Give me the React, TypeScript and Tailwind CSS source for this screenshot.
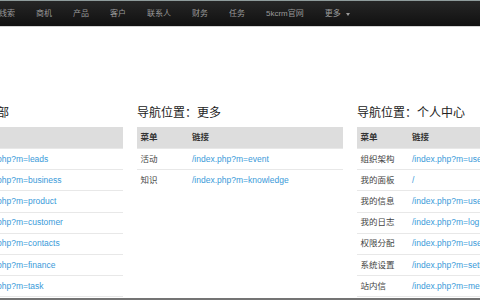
import React from "react";

const font = { fontFamily: '"Liberation Sans", Arial, "Noto Sans CJK SC", sans-serif' };

const navItems = ["线索", "商机", "产品", "客户", "联系人", "财务", "任务", "5kcrm官网"];

type Row = [string, string];

const topRows: Row[] = [
  ["线索", "/index.php?m=leads"],
  ["商机", "/index.php?m=business"],
  ["产品", "/index.php?m=product"],
  ["客户", "/index.php?m=customer"],
  ["联系人", "/index.php?m=contacts"],
  ["财务", "/index.php?m=finance"],
  ["任务", "/index.php?m=task"],
  ["日程", "/index.php?m=event"],
];

const moreRows: Row[] = [
  ["活动", "/index.php?m=event"],
  ["知识", "/index.php?m=knowledge"],
];

const userRows: Row[] = [
  ["组织架构", "/index.php?m=user&a=department"],
  ["我的面板", "/"],
  ["我的信息", "/index.php?m=user&a=edit"],
  ["我的日志", "/index.php?m=log"],
  ["权限分配", "/index.php?m=user&a=role"],
  ["系统设置", "/index.php?m=setting"],
  ["站内信", "/index.php?m=message"],
  ["通讯录", "/index.php?m=user&a=contacts"],
];

function NavTable({ title, rows, titleClass }: { title: string; rows: Row[]; titleClass?: string }) {
  return (
    <div className="w-[206px] shrink-0 pt-[78px]">
      <h3 className={"text-[12px] leading-[16px] text-[#222] font-normal whitespace-nowrap " + (titleClass ?? "")}>{title}</h3>
      <div className="mt-[6px]">
        <div className="flex items-center h-[21px] bg-[#dddddd] text-[8.5px] font-bold text-[#333]">
          <div className="w-[55px] pl-[3.5px] shrink-0">菜单</div>
          <div>链接</div>
        </div>
        {rows.map(([name, link]) => (
          <div
            key={name}
            className="flex items-center h-[21.2px] border-t border-[#e8e8e8] text-[8.5px] whitespace-nowrap overflow-hidden"
          >
            <div className="w-[55px] pl-[3.5px] shrink-0 text-[#444]">{name}</div>
            <div className="text-[#3a9ad9]">{link}</div>
          </div>
        ))}
      </div>
    </div>
  );
}

export default function App() {
  return (
    <div className="w-[480px] h-[300px] flex flex-col overflow-hidden bg-white" style={font}>
      <div className="h-[27px] shrink-0 bg-gradient-to-b from-[#262626] to-[#111111] border-t border-[#8f9c9c] border-b border-b-[#d4d4d4] flex items-center overflow-hidden">
        <ul className="flex items-center -ml-[11.5px] text-[8px] text-[#9a9a9a] whitespace-nowrap">
          {navItems.map((n) => (
            <li key={n} className="px-[10.5px] leading-[25px]">
              {n}
            </li>
          ))}
          <li className="px-[10.5px] leading-[25px] flex items-center">
            更多
            <span className="ml-[5px] inline-block w-0 h-0 border-l-[2.5px] border-r-[2.5px] border-t-[3px] border-l-transparent border-r-transparent border-t-[#9a9a9a] mt-[1px]" />
          </li>
        </ul>
      </div>
      <div className="flex-1 flex justify-center gap-[14px] overflow-hidden">
        <NavTable title="导航位置：顶部" rows={topRows} titleClass="pl-[8px]" />
        <NavTable title="导航位置：更多" rows={moreRows} />
        <NavTable title="导航位置：个人中心" rows={userRows} />
      </div>
      <div className="h-[2px] shrink-0 bg-[#747474]" />
    </div>
  );
}
